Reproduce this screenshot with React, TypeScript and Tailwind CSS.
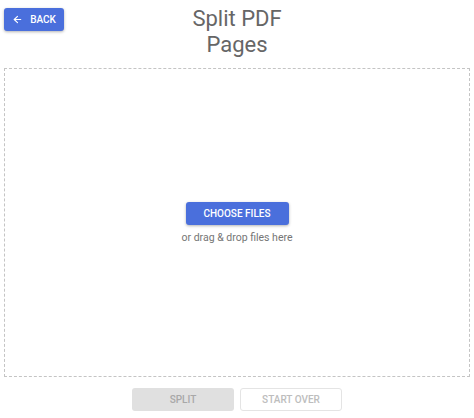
import { ArrowLeft } from 'lucide-react';

export default function App() {
  return (
    <div className="w-[474px] h-[418px] bg-white px-1 pt-[6px] font-['Roboto','Liberation_Sans',sans-serif]">
      <div className="relative flex justify-center">
        <button className="absolute left-0 top-[2px] flex h-[23px] w-[60px] items-center justify-center gap-[7px] rounded-[3px] bg-[#4a6fdc] text-[10px] font-medium text-white shadow-[0_1px_3px_rgba(0,0,0,0.3)]">
          <ArrowLeft size={11} strokeWidth={2.5} />
          BACK
        </button>
        <h1 className="w-[120px] text-center text-[22px] leading-[26px] text-[#666666]">Split PDF Pages</h1>
      </div>

      <div className="mt-[10px] flex h-[309px] flex-col items-center justify-center border border-dashed border-[#c4c4c4]">
        <button className="h-[23px] w-[103px] rounded-[3px] bg-[#4a6fdc] text-[10px] font-medium text-white shadow-[0_1px_3px_rgba(0,0,0,0.3)]">
          CHOOSE FILES
        </button>
        <p className="mt-[7px] text-[10.5px] leading-[12px] text-[#757575]">or drag &amp; drop files here</p>
      </div>

      <div className="mt-[11px] flex justify-center gap-[6px]">
        <button disabled className="h-[23px] w-[102px] rounded-[3px] bg-[#e0e0e0] text-[10px] font-medium text-[#a8a8a8]">
          SPLIT
        </button>
        <button disabled className="h-[23px] w-[102px] rounded-[3px] border border-[#e4e4e4] bg-white text-[10px] font-medium text-[#bdbdbd]">
          START OVER
        </button>
      </div>
    </div>
  );
}
